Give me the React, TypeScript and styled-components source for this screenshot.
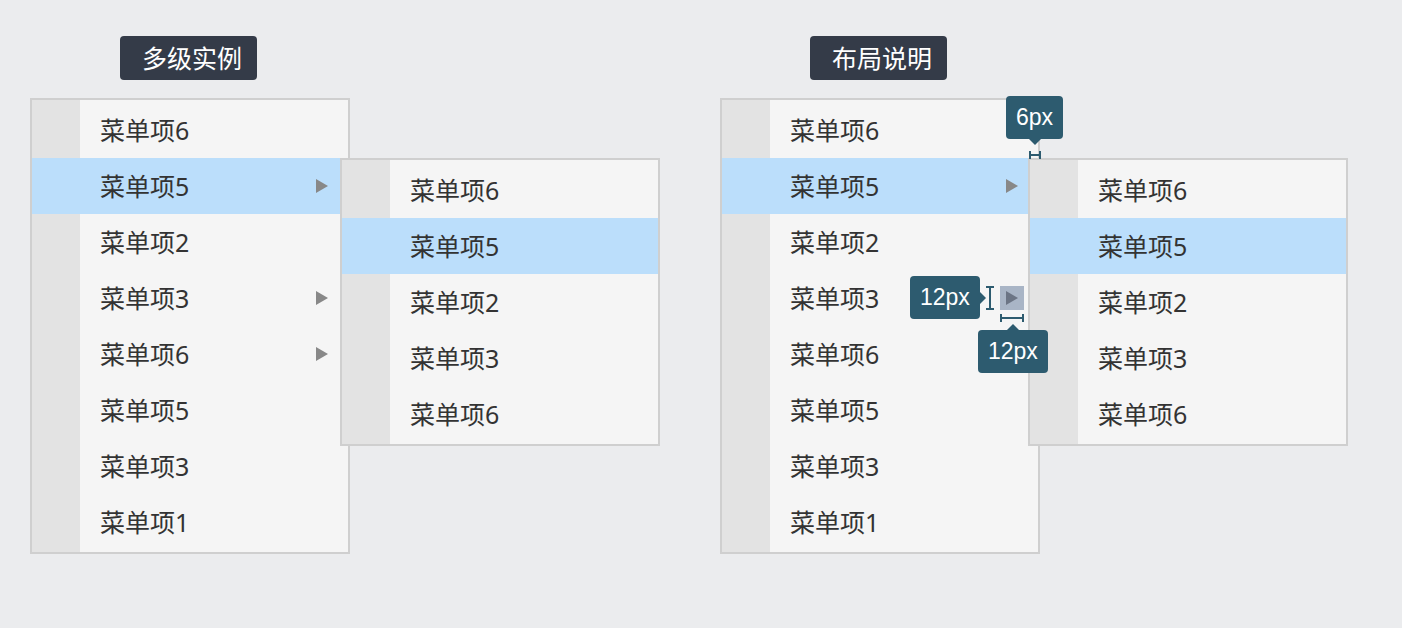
import { createGlobalStyle, styled, css } from "styled-components";

const GlobalStyle = createGlobalStyle`
  html, body {
    margin: 0;
    padding: 0;
    background: #ebecee;
  }
  body {
    font-family: "Noto Sans", "Noto Sans CJK SC", sans-serif;
    color: #333;
  }
`;

type Item = { label: string; arrow?: boolean; active?: boolean };

const mainItems: Item[] = [
  { label: "菜单项6" },
  { label: "菜单项5", arrow: true, active: true },
  { label: "菜单项2" },
  { label: "菜单项3", arrow: true },
  { label: "菜单项6", arrow: true },
  { label: "菜单项5" },
  { label: "菜单项3" },
  { label: "菜单项1" },
];

const subItems: Item[] = [
  { label: "菜单项6" },
  { label: "菜单项5", active: true },
  { label: "菜单项2" },
  { label: "菜单项3" },
  { label: "菜单项6" },
];

const ACCENT = "#2d5b6f";

const Page = styled.div`
  display: grid;
  grid-template-columns: 690px 690px;
  padding: 36px 0 0 30px;
  height: 628px;
  box-sizing: border-box;
`;

const Panel = styled.section`
  display: flex;
  flex-direction: column;
  align-items: flex-start;
`;

const Title = styled.h2`
  margin: 0 0 18px 90px;
  height: 44px;
  line-height: 44px;
  padding: 0 15px 0 22px;
  background: #343b48;
  color: #fff;
  font-size: 25px;
  font-weight: 400;
  border-radius: 4px;
`;

const Menu = styled.ul<{ $sub?: boolean; $overlap?: number }>`
  position: relative;
  list-style: none;
  margin: 0;
  padding: 2px 0;
  width: 320px;
  box-sizing: border-box;
  border: 2px solid #cfcfcf;
  background: linear-gradient(to right, #e3e3e3 48px, #f5f5f5 48px);
  ${(p) =>
    p.$sub &&
    css`
      position: absolute;
      top: 0;
      left: calc(100% - ${p.$overlap ?? 8}px);
      z-index: 2;
    `}
`;

const Row = styled.li<{ $active?: boolean }>`
  position: relative;
  display: flex;
  align-items: center;
  height: 56px;
  padding: 0 14px 0 68px;
  font-size: 25px;
  line-height: 1;
  color: #333;
  background: ${(p) => (p.$active ? "#bbdefb" : "transparent")};
`;

const Label = styled.span`
  flex: 1;
`;

const ArrowBox = styled.span<{ $marked?: boolean }>`
  display: flex;
  align-items: center;
  justify-content: flex-start;
  width: 24px;
  height: 24px;
  padding-left: 6px;
  box-sizing: border-box;
  background: ${(p) => (p.$marked ? "#a9b5c6" : "transparent")};
  &::before {
    content: "";
    width: 0;
    height: 0;
    border-top: 7.5px solid transparent;
    border-bottom: 7.5px solid transparent;
    border-left: 12px solid ${(p) => (p.$marked ? "#6c7585" : "#888")};
  }
`;

const Tag = styled.div<{ $x: number; $y: number; $pointer: "down" | "right" | "up" }>`
  position: absolute;
  left: ${(p) => p.$x}px;
  top: ${(p) => p.$y}px;
  z-index: 3;
  height: 43px;
  line-height: 43px;
  padding: 0 10px;
  background: ${ACCENT};
  color: #fff;
  border-radius: 4px;
  font-family: "Liberation Sans", Arial, sans-serif;
  font-size: 23px;
  white-space: nowrap;
  &::after {
    content: "";
    position: absolute;
    width: 0;
    height: 0;
    ${(p) =>
      p.$pointer === "down"
        ? css`
            left: 50%;
            top: 100%;
            margin-left: -6px;
            border-left: 6px solid transparent;
            border-right: 6px solid transparent;
            border-top: 6px solid ${ACCENT};
          `
        : p.$pointer === "up"
        ? css`
            left: 50%;
            bottom: 100%;
            margin-left: -6px;
            border-left: 6px solid transparent;
            border-right: 6px solid transparent;
            border-bottom: 6px solid ${ACCENT};
          `
        : css`
            left: 100%;
            top: 50%;
            margin-top: -6px;
            border-top: 6px solid transparent;
            border-bottom: 6px solid transparent;
            border-left: 6px solid ${ACCENT};
          `}
  }
`;

const Measure = styled.svg<{ $x: number; $y: number }>`
  position: absolute;
  left: ${(p) => p.$x}px;
  top: ${(p) => p.$y}px;
  z-index: 3;
  overflow: visible;
`;

function HMeasure({ x, y, w, h }: { x: number; y: number; w: number; h: number }) {
  return (
    <Measure $x={x} $y={y} width={w} height={h} viewBox={`0 0 ${w} ${h}`}>
      <g stroke={ACCENT} strokeWidth={2} fill="none">
        <line x1={1} y1={0} x2={1} y2={h} />
        <line x1={w - 1} y1={0} x2={w - 1} y2={h} />
        <line x1={1} y1={h / 2} x2={w - 1} y2={h / 2} />
      </g>
    </Measure>
  );
}

function VMeasure({ x, y, w, h }: { x: number; y: number; w: number; h: number }) {
  return (
    <Measure $x={x} $y={y} width={w} height={h} viewBox={`0 0 ${w} ${h}`}>
      <g stroke={ACCENT} strokeWidth={2} fill="none">
        <line x1={0} y1={1} x2={w} y2={1} />
        <line x1={0} y1={h - 1} x2={w} y2={h - 1} />
        <line x1={w / 2} y1={1} x2={w / 2} y2={h - 1} />
      </g>
    </Measure>
  );
}

function MenuList({
  items,
  sub,
  overlap,
  marked,
}: {
  items: Item[];
  sub?: Item[];
  overlap?: number;
  marked?: number;
}) {
  return (
    <>
      {items.map((item, idx) => (
        <Row key={idx} $active={item.active}>
          <Label>{item.label}</Label>
          {item.arrow && <ArrowBox $marked={marked === idx} />}
          {item.active && sub && (
            <Menu $sub $overlap={overlap}>
              <MenuList items={sub} />
            </Menu>
          )}
        </Row>
      ))}
    </>
  );
}

export default function App() {
  return (
    <>
      <GlobalStyle />
      <Page>
        <Panel>
          <Title>多级实例</Title>
          <Menu>
            <MenuList items={mainItems} sub={subItems} overlap={8} />
          </Menu>
        </Panel>
        <Panel>
          <Title>布局说明</Title>
          <Menu>
            <MenuList items={mainItems} sub={subItems} overlap={10} marked={3} />
            <Tag $x={284} $y={-4} $pointer="down">6px</Tag>
            <HMeasure x={307} y={51} w={12} h={8} />
            <Tag $x={188} $y={176} $pointer="right">12px</Tag>
            <VMeasure x={264} y={186} w={8} h={24} />
            <HMeasure x={278} y={214} w={24} h={8} />
            <Tag $x={256} $y={230} $pointer="up">12px</Tag>
          </Menu>
        </Panel>
      </Page>
    </>
  );
}
